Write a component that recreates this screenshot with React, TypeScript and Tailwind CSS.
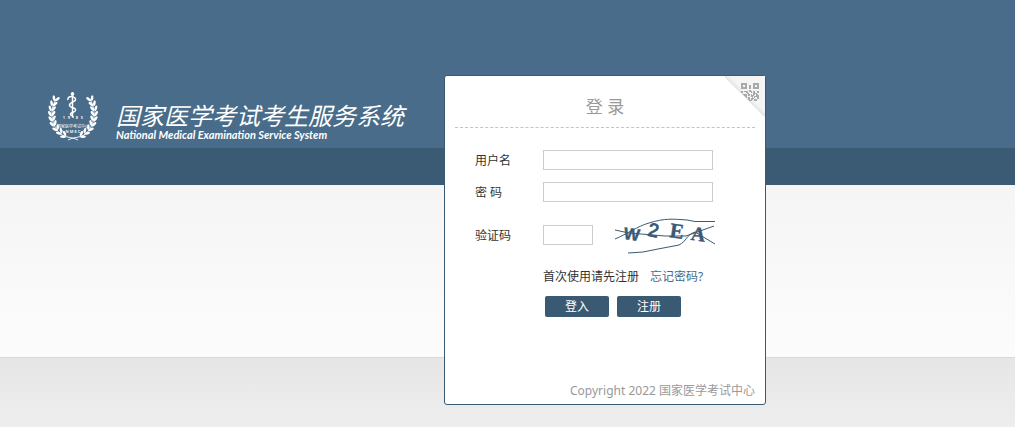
import React from "react";

type Sprig = { x: number; y: number; angle: number };

const sprigs: Sprig[] = [
  { x: 7, y: 9, angle: 18 },
  { x: 4.8, y: 14, angle: 14 },
  { x: 3.6, y: 19, angle: 6 },
  { x: 3.6, y: 24, angle: -4 },
  { x: 4.4, y: 29, angle: -12 },
  { x: 6, y: 34, angle: -24 },
  { x: 9, y: 38.5, angle: -38 },
  { x: 13, y: 42, angle: -50 },
  { x: 17, y: 45, angle: -62 },
];

function Branch() {
  return (
    <g>
      {sprigs.map((s) => (
        <g key={s.y} transform={`translate(${s.x} ${s.y}) rotate(${s.angle})`} fill="#fff">
          <ellipse cx="-1.6" cy="-1.5" rx="1.3" ry="2.9" transform="rotate(-24 -1.6 -1.5)" />
          <ellipse cx="2" cy="-1.5" rx="1.3" ry="2.9" transform="rotate(36 2 -1.5)" />
        </g>
      ))}
      <path d="M8 8C1 20 3 36 14 44C19 47 25 46 30 49" fill="none" stroke="#fff" strokeWidth="0.9" />
    </g>
  );
}

function Emblem() {
  return (
    <svg viewBox="0 0 50 52" className="h-[52px] w-[50px] shrink-0" role="img" aria-label="NMEC">
      <Branch />
      <g transform="translate(50 0) scale(-1 1)">
        <Branch />
      </g>
      <path d="M24.5 1V26" stroke="#fff" strokeWidth="1.5" />
      <circle cx="24.5" cy="3" r="1.8" fill="#fff" />
      <path
        d="M20 9C19 5.5 24 4.5 27 7C30 11 21 10.5 21.5 14.5C22 17.5 28.5 16 27.5 19.5C26.5 22 22 21 22.5 23.5C23.5 25 26 24.5 25 27"
        fill="none"
        stroke="#fff"
        strokeWidth="1.5"
      />
      <g fill="#fff" textAnchor="middle" className="font-['Noto_Sans','Noto_Sans_CJK_SC',sans-serif]">
        <text x="25" y="28" fontSize="4" fontWeight="600">
          <tspan x="16">1</tspan>
          <tspan x="21">9</tspan>
          <tspan x="29">8</tspan>
          <tspan x="34">5</tspan>
        </text>
        <text x="25" y="37" fontSize="4">国家医学考试中心</text>
        <text x="25" y="42" fontSize="4" fontWeight="600">N M E C</text>
      </g>
    </svg>
  );
}

const qrRows = [
  "111111......111111",
  "111111......111111",
  "11..11..11..11..11",
  "11..11..11..11..11",
  "111111..11..111111",
  "111111..11..111111",
  "..................",
  "........11........",
  "11.1111.111.11..11",
  "11...11...1.11..11",
  "......11....1111..",
  "111111.11.1.11.11.",
  "111111.11.111..111",
  "11..11....11.11111",
  "11..11.11..1.1..11",
  "11..11.11.111...11",
  "111111.11.11.111..",
  "111111..111..111..",
];

function QrCorner() {
  return (
    <svg viewBox="0 0 40 40" className="h-10 w-10" aria-hidden="true">
      <path d="M0 0H40V40Z" fill="#f5f5f5" />
      <path d="M0 0L40 40" stroke="#e4e4e4" strokeWidth="2" />
      <path d="M2 0L40 38" stroke="#eeeeee" strokeWidth="2" />
      <g fill="#a9a9a9" shapeRendering="crispEdges">
        {qrRows.flatMap((row, y) =>
          row.split("").map((cell, x) =>
            cell === "1" && x >= y - 9 ? <rect key={`${x}-${y}`} x={16 + x} y={7 + y} width="1" height="1" /> : null
          )
        )}
      </g>
    </svg>
  );
}

function Captcha() {
  return (
    <svg viewBox="0 0 100 44" className="h-11 w-[100px]" role="img" aria-label="验证码">
      <g fill="none" stroke="#3a5a75" strokeWidth="1">
        <path d="M0 26C12 21 23 13 34 10C50 5 58 6 72 7L80 8.5H100" />
        <path d="M0 17L14 20L38 22L50 23H71L99 13" />
        <path d="M13 40L28 39L43 36L64 32C72 28 71 22 80 19L100 31" />
      </g>
      <g fill="#3a5a75" fontWeight="700" stroke="#3a5a75" strokeWidth="0.4">
        <text x="9" y="27" fontSize="17" className="font-['Liberation_Sans',sans-serif]" transform="rotate(8 16 20)">W</text>
        <text x="33" y="24" fontSize="19" fontWeight="400" strokeWidth="0.9" className="font-['Liberation_Sans',sans-serif]" transform="rotate(12 39 18)">2</text>
        <text x="55" y="25" fontSize="21" className="font-['Liberation_Serif',serif]" transform="rotate(8 62 18)">E</text>
        <text x="76" y="28" fontSize="20" className="font-['Liberation_Serif',serif]" transform="rotate(8 84 22)">A</text>
      </g>
    </svg>
  );
}

const inputClass = "h-5 border border-[#cccccc] bg-white px-1 text-xs outline-none";
const labelClass = "w-[68px] pt-0.5";
const buttonClass = "h-[21px] w-16 rounded-[2px] bg-[#3a5972] text-xs leading-5 text-white";

function LoginCard() {
  return (
    <section className="relative flex min-h-[330px] w-[322px] shrink-0 flex-col rounded-[3px] border border-[#3a5972] bg-white px-2.5 pb-[3px] text-xs text-[#333333]">
      <a href="#qr" aria-label="二维码登录" className="absolute top-0 right-0">
        <QrCorner />
      </a>
      <h2 className="border-b border-dashed border-[#c4c4c4] pt-[19px] pb-2 text-center text-[17px] leading-6 text-[#999999]">登 录</h2>
      <form className="flex flex-col px-5 pt-[22px]" onSubmit={(e) => e.preventDefault()}>
        <div className="flex items-center">
          <label htmlFor="user" className={labelClass}>用户名</label>
          <input id="user" type="text" className={`${inputClass} w-[170px]`} />
        </div>
        <div className="mt-3 flex items-center">
          <label htmlFor="password" className={labelClass}>密 码</label>
          <input id="password" type="password" className={`${inputClass} w-[170px]`} />
        </div>
        <div className="mt-[11px] flex items-center">
          <label htmlFor="code" className={labelClass}>验证码</label>
          <input id="code" type="text" className={`${inputClass} w-[50px]`} />
          <div className="ml-[22px]">
            <Captcha />
          </div>
        </div>
        <div className="mt-[10px] ml-[68px] flex gap-[11px] leading-5">
          <a href="#register">首次使用请先注册</a>
          <a href="#forgot" className="text-[#456a87]">忘记密码?</a>
        </div>
        <div className="mt-[9px] ml-[70px] flex gap-2">
          <button type="submit" className={buttonClass}>登入</button>
          <button type="button" className={buttonClass}>注册</button>
        </div>
      </form>
      <p className="mt-auto text-right leading-5 text-[#999999]">Copyright 2022 国家医学考试中心</p>
    </section>
  );
}

export default function App() {
  return (
    <div className="grid min-h-screen font-['Noto_Sans','Noto_Sans_CJK_SC',sans-serif]">
      <div className="col-start-1 row-start-1 flex flex-col" aria-hidden="true">
        <div className="h-[148px] bg-[#486c89]" />
        <div className="h-[37px] bg-[#3b5b74]" />
        <div className="h-[172px] bg-linear-to-b from-[#f5f5f5] to-[#fcfcfc]" />
        <div className="flex-1 border-t border-[#d8d8d8] bg-linear-to-b from-[#e6e6e6] to-[#eeeeee]" />
      </div>
      <main className="col-start-1 row-start-1 flex items-start pt-[75px] pl-12">
        <header className="flex w-[396px] shrink-0 items-start pt-4 text-white">
          <Emblem />
          <div className="ml-[18px] whitespace-nowrap italic">
            <h1 className="pt-3 text-2xl leading-[26px]">国家医学考试考生服务系统</h1>
            <p className="font-['Lato',sans-serif] text-[11px] leading-3 font-bold">National Medical Examination Service System</p>
          </div>
        </header>
        <LoginCard />
      </main>
    </div>
  );
}
